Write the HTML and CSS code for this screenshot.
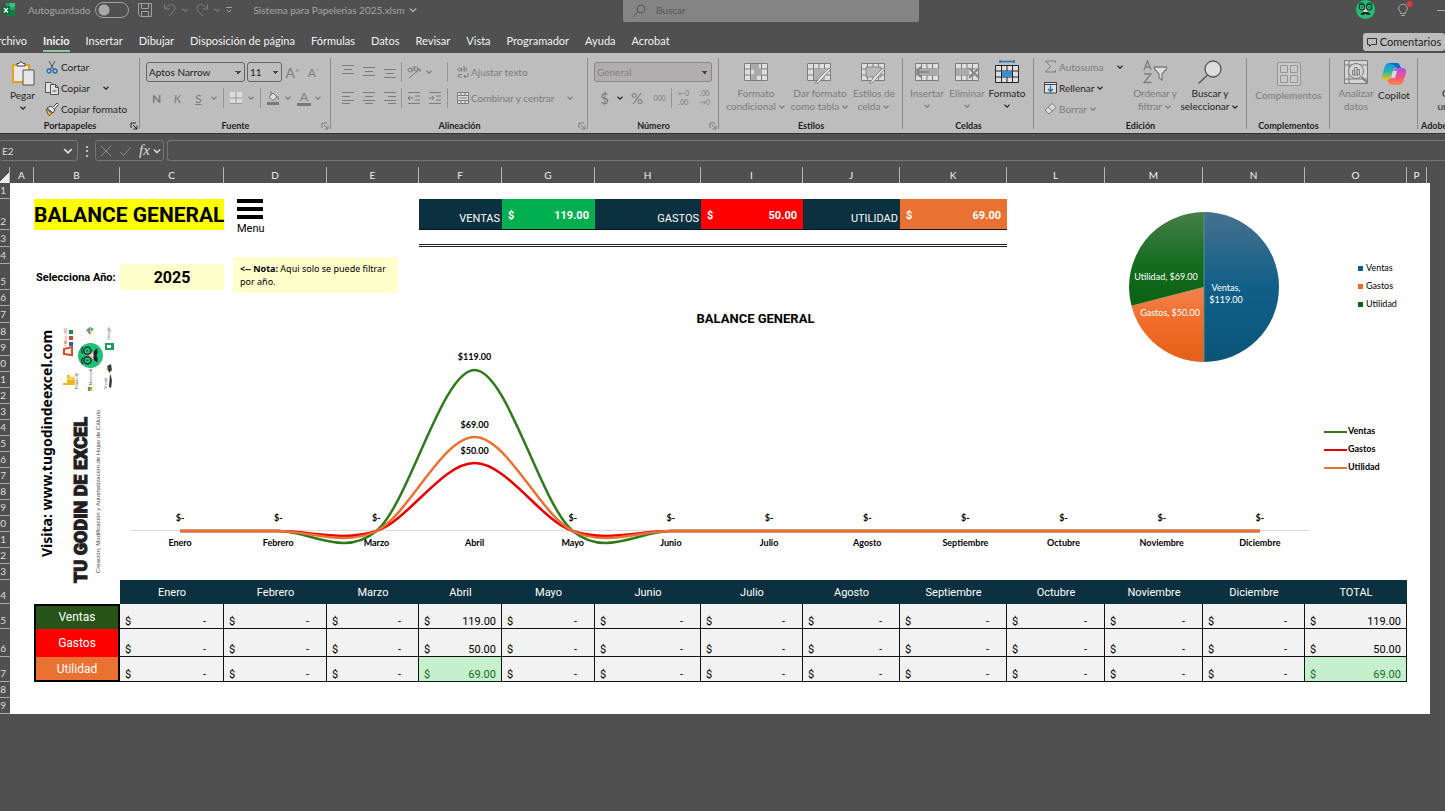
FILE: index.html
```html
<!DOCTYPE html>
<html lang="es">
<head>
  <meta charset="UTF-8">
  <title>Sistema para Papelerias 2025.xlsm</title>
  <link rel="stylesheet" href="styles.css">
</head>
<body>
  <!-- iconos compartidos -->
  <svg class="defs" width="0" height="0" aria-hidden="true">
    <symbol id="chev" viewBox="0 0 8 8"><path d="M1.500 2.800L4 5.200L6.500 2.800" fill="none" stroke="currentColor" stroke-width="1.200"/></symbol>
    <symbol id="launch" viewBox="0 0 8 8"><path d="M1 6V1H6M3 3L7 7M7 3.500V7H3.500" fill="none" stroke="currentColor"/></symbol>
    <symbol id="al-top" viewBox="0 0 12 12"><path d="M0 1.500H12M2 5.500H10M0 9.500H12" stroke="currentColor"/></symbol>
    <symbol id="al-left" viewBox="0 0 12 12"><path d="M0 .5H12M0 4.500H8M0 8.500H12M0 11.500H8" stroke="currentColor"/></symbol>
    <symbol id="al-center" viewBox="0 0 12 12"><path d="M0 .5H12M2 4.500H10M0 8.500H12M2 11.500H10" stroke="currentColor"/></symbol>
    <symbol id="al-right" viewBox="0 0 12 12"><path d="M0 .5H12M4 4.500H12M0 8.500H12M4 11.500H12" stroke="currentColor"/></symbol>
    <symbol id="tabla" viewBox="0 0 24 20"><path d="M.5 1.500H23.500V18.500H.5Z" fill="#dedede" stroke="currentColor"/><path d="M.5 7H23.500M.5 13H23.500M6.500 1.500V18.500M12 1.500V18.500M17.500 1.500V18.500" stroke="currentColor" fill="none"/></symbol>
    <symbol id="cara" viewBox="0 0 24 24"><circle cx="12" cy="12" r="12" fill="#1fc071"/><path d="M12 7L15.500 15H8.500Z" fill="#f3c9a5"/><circle cx="7.500" cy="9" r="3.500" fill="none" stroke="#123" stroke-width="1.300"/><circle cx="16.500" cy="9" r="3.500" fill="none" stroke="#123" stroke-width="1.300"/><path d="M3.500 4.500Q7 2.500 10 4.500M14 4.500Q17 2.500 20.500 4.500" fill="none" stroke="#123"/><path d="M6 18Q9 14 12 16Q15 14 18 18Q14 19 12 17Q10 19 6 18" fill="#123" stroke="#123"/><path d="M7 9H8M16 9H17" stroke="#123" stroke-width="2"/></symbol>
  </svg>

  <header class="titlebar">
    <div class="quick">
      <svg class="xl" width="14" height="14" viewBox="0 0 14 14"><path d="M4 0H13V13H4Z" fill="#21a366"/><path d="M8 0H13V4H8Z" fill="#33c481"/><path d="M4 7H13V13H4Z" fill="#107c41"/><path d="M0 3H8V11H0Z" fill="#0b6b38"/><path d="M2 5L6 9.500M6 5L2 9.500" stroke="#fff" stroke-width="1.300"/></svg>
      <label for="auto">Autoguardado</label>
      <input type="checkbox" id="auto" class="toggle">
      <button class="plain" aria-label="Guardar"><svg width="14" height="14" viewBox="0 0 14 14" fill="none" stroke="#a0a0a0"><path d="M.5.5H13.500V13.500H2.500L.5 11.500ZM3.500.5V5.500H10.500V.5M3.500 13.500V8.500H10.500V13.500"/></svg></button>
      <button class="plain off undo" aria-label="Deshacer"><svg width="14" height="14" viewBox="0 0 14 14" fill="none" stroke="currentColor"><path d="M1.500 1V6H6.500M1.500 6L5 2.500Q9 0 11.500 3Q13 6 10.500 8.500L6 13"/></svg><svg width="8" height="8"><use href="#chev"/></svg></button>
      <button class="plain off undo" aria-label="Rehacer"><svg width="14" height="14" viewBox="0 0 14 14" fill="none" stroke="currentColor"><path d="M12.500 1V6H7.500M12.500 6L9 2.500Q5 0 2.500 3Q1 6 3.500 8.500L8 13"/></svg><svg width="8" height="8"><use href="#chev"/></svg></button>
      <button class="plain" aria-label="Personalizar"><svg width="8" height="8" viewBox="0 0 8 8" fill="none" stroke="#a0a0a0"><path d="M1 1.500H7M2 4L4 6L6 4"/></svg></button>
      <span class="file">Sistema para Papelerias 2025.xlsm <svg width="10" height="10"><use href="#chev"/></svg></span>
    </div>
    <div class="search">
      <svg width="13" height="13" viewBox="0 0 13 13" fill="none" stroke="#555"><circle cx="8" cy="5" r="4"/><path d="M5 8L.5 12.500"/></svg>
      <input type="text" placeholder="Buscar" aria-label="Buscar">
    </div>
    <div class="account">
      <svg width="19" height="19"><use href="#cara"/></svg>
      <svg width="18" height="18" viewBox="0 0 18 18" fill="none" stroke="#a8a8a8"><path d="M5.500 12.500Q5.500 10.500 4 9A4.300 4.300 0 1 1 12 9Q10.500 10.500 10.500 12.500ZM6 14.500H10"/><circle cx="14.500" cy="3" r="3" fill="#d83b3b" stroke="none"/></svg>
      <svg width="10" height="10" viewBox="0 0 10 10"><path d="M0 5.500H10" stroke="#aaa"/></svg>
    </div>
  </header>

  <nav class="tabs">
    <a href="#">Archivo</a>
    <a href="#" class="active">Inicio</a>
    <a href="#">Insertar</a>
    <a href="#">Dibujar</a>
    <a href="#">Disposición de página</a>
    <a href="#">Fórmulas</a>
    <a href="#">Datos</a>
    <a href="#">Revisar</a>
    <a href="#">Vista</a>
    <a href="#">Programador</a>
    <a href="#">Ayuda</a>
    <a href="#">Acrobat</a>
    <button class="comments"><svg width="10" height="10" viewBox="0 0 10 10" fill="none" stroke="#333"><path d="M.5 1.500H9.500V7.500H4.500L2.500 9.500V7.500H.5Z"/></svg>Comentarios</button>
  </nav>

  <section class="ribbon">
    <div class="group clip">
      <div class="tools">
        <button class="big">
          <svg width="24" height="26" viewBox="0 0 24 26"><path d="M2 5H18V22H2Z" fill="#e8e8e8" stroke="#e3a21a" stroke-width="2"/><path d="M6 6V3.500H8Q10 0 12 3.500H14V6Z" fill="#eee" stroke="#444"/><path d="M12 10H23V25H12Z" fill="#e6e6e6" stroke="#555"/></svg>
          Pegar<svg width="8" height="8"><use href="#chev"/></svg>
        </button>
        <div class="stack">
          <button><svg width="14" height="14" viewBox="0 0 14 14" fill="none"><path d="M4 1L9 10M10 1L5 10" stroke="#555"/><circle cx="4" cy="11" r="2" stroke="#1f6fb5" stroke-width="1.300"/><circle cx="10" cy="11" r="2" stroke="#1f6fb5" stroke-width="1.300"/></svg>Cortar</button>
          <button><svg width="14" height="14" viewBox="0 0 14 14" fill="#e2e2e2" stroke="#555"><path d="M.5 1.500H6L7.500 3V11.500H.5Z"/><path d="M5.500 3.500H10.500L13.500 6.500V13.500H5.500ZM10.500 3.500V6.500H13.500M7.500 10H11.500"/></svg>Copiar <svg class="far" width="8" height="8"><use href="#chev"/></svg></button>
          <button><svg width="14" height="14" viewBox="0 0 14 14"><path d="M1 7L7 11L5 13.500L3 12.500Z" fill="#e8b54a" stroke="#7a5a1a"/><path d="M2 6L6 4L10 8L8 11Z" fill="#e6e6e6" stroke="#444"/><path d="M7.500 5.500L12 1L13.500 2.500L9.500 7" fill="#e6e6e6" stroke="#444"/></svg>Copiar formato</button>
        </div>
      </div>
      <div class="caption">Portapapeles<svg width="8" height="8"><use href="#launch"/></svg></div>
    </div>

    <div class="group font">
      <div class="tools rows">
        <div class="row">
          <select class="face" aria-label="Fuente"><option>Aptos Narrow</option></select>
          <select class="size" aria-label="Tamaño"><option>11</option></select>
          <button class="ico off grow">A<sup>^</sup></button>
          <button class="ico off shrink">A<sup>ˇ</sup></button>
        </div>
        <div class="row off">
          <button class="ico"><b>N</b></button>
          <button class="ico"><i>K</i></button>
          <button class="ico"><u>S</u></button>
          <svg class="chev" width="8" height="8"><use href="#chev"/></svg>
          <span class="sep"></span>
          <button class="ico" aria-label="Bordes"><svg width="12" height="12" viewBox="0 0 12 12"><path d="M0 0H12V12H0Z" fill="#dcdcdc"/><path d="M6 0V12M0 6H12M0 11.500H12" stroke="#999"/></svg></button>
          <svg class="chev" width="8" height="8"><use href="#chev"/></svg>
          <span class="sep"></span>
          <button class="ico" aria-label="Relleno"><svg width="14" height="14" viewBox="0 0 14 14"><path d="M3 6L7 2L11 6L7 9.500ZM5 0V4M11 5Q13 7 12 9" fill="#ddd" stroke="#777"/><path d="M1 11H13V14H1Z" fill="#777"/></svg></button>
          <svg class="chev" width="8" height="8"><use href="#chev"/></svg>
          <button class="ico color">A</button>
          <svg class="chev" width="8" height="8"><use href="#chev"/></svg>
        </div>
      </div>
      <div class="caption">Fuente<svg class="off" width="8" height="8"><use href="#launch"/></svg></div>
    </div>

    <div class="group align">
      <div class="tools rows off">
        <div class="row">
          <button class="ico" aria-label="Arriba"><svg class="up" width="12" height="12"><use href="#al-top"/></svg></button>
          <button class="ico" aria-label="Medio"><svg width="12" height="12"><use href="#al-top"/></svg></button>
          <button class="ico" aria-label="Abajo"><svg class="down" width="12" height="12"><use href="#al-top"/></svg></button>
          <span class="sep tight"></span>
          <button class="ico" aria-label="Orientación"><svg width="14" height="14" viewBox="0 0 14 14" fill="none" stroke="currentColor"><circle cx="3" cy="5" r="2"/><path d="M5 3V7M7 1V6M2 13L13 4M10 4H13V7"/><circle cx="9" cy="4" r="2"/></svg></button>
          <svg class="chev" width="8" height="8"><use href="#chev"/></svg>
          <span class="sep push"></span>
          <button class="wide"><svg width="12" height="12" viewBox="0 0 12 12" fill="none" stroke="currentColor"><circle cx="2.500" cy="3.500" r="1.500"/><path d="M4.500 2V5.500M7 0V5.500M5 8.500H2Q.5 9 1 10.500L4.500 11.500M11 7V10.500H7M8.500 9L7 10.500L8.500 12"/><circle cx="8.500" cy="3.500" r="1.500"/></svg>Ajustar texto</button>
        </div>
        <div class="row">
          <button class="ico" aria-label="Izquierda"><svg width="12" height="12"><use href="#al-left"/></svg></button>
          <button class="ico" aria-label="Centrar"><svg width="12" height="12"><use href="#al-center"/></svg></button>
          <button class="ico" aria-label="Derecha"><svg width="12" height="12"><use href="#al-right"/></svg></button>
          <span class="sep tight"></span>
          <button class="ico" aria-label="Reducir sangría"><svg width="12" height="12" viewBox="0 0 12 12" stroke="currentColor" fill="none"><path d="M0 .5H12M7 4H12M7 8H12M0 11.500H12M5 6H0M2 4L0 6L2 8"/></svg></button>
          <button class="ico" aria-label="Aumentar sangría"><svg width="12" height="12" viewBox="0 0 12 12" stroke="currentColor" fill="none"><path d="M0 .5H12M7 4H12M7 8H12M0 11.500H12M5 6H0M3 4L5 6L3 8"/></svg></button>
          <span class="sep mid"></span>
          <button class="wide"><svg width="12" height="12" viewBox="0 0 12 12" stroke="currentColor" fill="#dcdcdc"><path d="M.5.5H11.500V11.500H.5ZM.5 3.500H11.500M.5 8.500H11.500M4 .5V3.500M8 .5V3.500M4 8.500V11.500M8 8.500V11.500M2 6H10"/></svg>Combinar y centrar <svg class="far" width="8" height="8"><use href="#chev"/></svg></button>
        </div>
      </div>
      <div class="caption">Alineación<svg class="off" width="8" height="8"><use href="#launch"/></svg></div>
    </div>

    <div class="group number">
      <div class="tools rows off">
        <div class="row"><select class="format" aria-label="Formato de número" disabled><option>General</option></select></div>
        <div class="row">
          <button class="ico sign">$</button>
          <svg class="chev dark" width="8" height="8"><use href="#chev"/></svg>
          <button class="ico sign percent">%</button>
          <button class="ico tiny">000</button>
          <span class="sep tight"></span>
          <button class="ico tiny"><span>←0</span><span>.00</span></button>
          <button class="ico tiny"><span>.00</span><span>→0</span></button>
        </div>
      </div>
      <div class="caption">Número<svg class="off" width="8" height="8"><use href="#launch"/></svg></div>
    </div>

    <div class="group styles">
      <div class="tools off">
        <button class="big w64"><svg width="24" height="24" viewBox="0 -2 24 24"><use href="#tabla" width="24" height="20"/><path d="M7 2H15V7H7ZM10 7H18V13H10ZM7 13H13V18H7Z" fill="#aaa"/></svg>Formato<span>condicional <svg width="8" height="8"><use href="#chev"/></svg></span></button>
        <button class="big w64"><svg width="26" height="24" viewBox="0 -2 26 24"><use href="#tabla" width="24" height="20"/><path d="M7 7H18V18H7Z" fill="#b0b0b0"/><path d="M24 7L15 17L11 21H8Q11 19 12 16L22 6Z" fill="#e4e4e4" stroke="#888"/></svg>Dar formato<span>como tabla <svg width="8" height="8"><use href="#chev"/></svg></span></button>
        <button class="big w44"><svg width="26" height="24" viewBox="0 -2 26 24"><use href="#tabla" width="24" height="20"/><path d="M5 5H20V15H5Z" fill="#b8b8b8" stroke="#888"/><path d="M24 7L15 17L11 21H8Q11 19 12 16L22 6Z" fill="#e4e4e4" stroke="#888"/></svg>Estilos de<span>celda <svg width="8" height="8"><use href="#chev"/></svg></span></button>
      </div>
      <div class="caption">Estilos</div>
    </div>

    <div class="group cells">
      <div class="tools">
        <button class="big off w40"><svg width="25" height="24" viewBox="0 -2 25 24"><use href="#tabla" width="24" height="20"/><path d="M2 7H24V13H2Z" fill="#aaa"/><path d="M14 10H1M6 5L1 10L6 15" stroke="#888" stroke-width="2" fill="none"/></svg>Insertar<svg width="8" height="8"><use href="#chev"/></svg></button>
        <button class="big off w40"><svg width="25" height="24" viewBox="0 -2 25 24"><use href="#tabla" width="24" height="20"/><path d="M1 7H14V13H1Z" fill="#aaa"/><path d="M14 6L24 16M24 6L14 16" stroke="#888" stroke-width="2"/></svg>Eliminar<svg width="8" height="8"><use href="#chev"/></svg></button>
        <button class="big w40"><svg width="24" height="24" viewBox="0 -4 24 24"><path d="M5 -2.500H19M5 -4V-1M19 -4V-1" stroke="#2a70ab" stroke-width="1.500"/><use href="#tabla" width="24" height="20"/><path d="M7 7H17V13H7Z" fill="#3a8cd0"/></svg>Formato<svg width="8" height="8"><use href="#chev"/></svg></button>
      </div>
      <div class="caption">Celdas</div>
    </div>

    <div class="group edit">
      <div class="tools">
        <div class="stack">
          <button class="off"><svg width="13" height="13" viewBox="0 0 13 13" fill="none" stroke="currentColor"><path d="M11.500 3V1H1.500L6.500 6.500L1.500 12H11.500V10"/></svg>Autosuma <svg class="far dark" width="8" height="8"><use href="#chev"/></svg></button>
          <button><svg width="13" height="13" viewBox="0 0 13 13" fill="#e0e0e0" stroke="#444"><path d="M.5 1.500H12.500V12H.5ZM.5 3.500H12.500"/><path d="M6.500 4.500V10M4 8L6.500 10.500L9 8" stroke="#1f6fb5" fill="none" stroke-width="1.300"/></svg>Rellenar<svg width="8" height="8"><use href="#chev"/></svg></button>
          <button class="off"><svg width="13" height="13" viewBox="0 0 13 13" fill="#ddd" stroke="currentColor"><path d="M1 8L8 1.500L12 5.500L5 12ZM4 5L8.500 9"/></svg>Borrar<svg width="8" height="8"><use href="#chev"/></svg></button>
        </div>
        <button class="big off sort"><svg width="26" height="24" viewBox="0 0 26 24" fill="none" stroke="currentColor" stroke-width="1.300"><path d="M2 10L5.500 1L9 10M3 7H8M2 14H9L2 22.500H9.500"/><path d="M12.500 7H24.500V9L20 14V20L17 18V14L12.500 9Z" fill="#ddd"/></svg>Ordenar y<span>filtrar <svg width="8" height="8"><use href="#chev"/></svg></span></button>
        <button class="big find"><svg width="26" height="24" viewBox="0 0 26 24" fill="#dcdcdc" stroke="#555" stroke-width="1.300"><circle cx="16" cy="9" r="8"/><path d="M10.500 15L1.500 23.500"/></svg>Buscar y<span>seleccionar <svg width="8" height="8"><use href="#chev"/></svg></span></button>
      </div>
      <div class="caption">Edición</div>
    </div>

    <div class="group addins">
      <div class="tools off">
        <button class="big"><svg width="24" height="24" viewBox="0 0 24 24" fill="#c8c8c8" stroke="#969696"><path d="M.5.5H23.500V23.500H.5Z"/><path d="M3.500 3.500H10.500V10.500H3.500ZM13.500 3.500H20.500V10.500H13.500ZM3.500 13.500H10.500V20.500H3.500ZM13.500 13.500H20.500V20.500H13.500Z"/></svg>Complementos</button>
      </div>
      <div class="caption">Complementos</div>
    </div>

    <div class="group copilot">
      <div class="tools">
        <button class="big off w38"><svg width="24" height="24" viewBox="0 0 24 24" fill="#d4d4d4" stroke="currentColor"><path d="M.5.5H23.500V23.500H.5ZM.5 5H23.500M.5 19H23.500M5 .5V23.500"/><circle cx="12" cy="11" r="7.500"/><path d="M17.500 17L23 22.500" stroke-width="2"/><path d="M8.500 10.500H10.500V15H8.500ZM10.500 7.500H13V15H10.500ZM13 9.500H15.500V15H13Z" fill="none"/></svg>Analizar<span>datos</span></button>
        <button class="big w38"><svg width="26" height="24" viewBox="0 0 26 24"><defs><linearGradient id="c1" x2="0" y2="1"><stop offset="0" stop-color="#1a8fe8"/><stop offset=".5" stop-color="#29b6a8"/><stop offset="1" stop-color="#f2c31b"/></linearGradient><linearGradient id="c2" x2="0" y2="1"><stop offset="0" stop-color="#a855e8"/><stop offset=".5" stop-color="#f0508c"/><stop offset="1" stop-color="#ff8a3c"/></linearGradient></defs><path d="M8 1H16Q18 1 19 4L20 6H16Q13 6 12 9L10 16Q9 18 6 18H4Q0 18 1 13L4 4Q5 1 8 1Z" fill="url(#c1)"/><path d="M18 23H10Q8 23 7 20L6 18Q9 18 10 16L13 9Q14 6 17 6H21Q26 6 25 11L22 20Q21 23 18 23Z" fill="url(#c2)"/><path d="M8 1H16Q18 1 19 4L20 6H16L13 3Z" fill="#1c5fd0"/><path d="M12 9L10 16H14L16 9Z" fill="#d8d8e8"/></svg>Copilot</button>
      </div>
      <div class="caption"></div>
    </div>

    <div class="group adobe">
      <div class="tools">
        <button class="big"><svg width="22" height="24" viewBox="0 0 22 24"><path d="M3 3.500H20V21H3Z" fill="#d9e2f5" stroke="#3467c9" stroke-width="1.500"/></svg>Crear<span>un PDF</span></button>
      </div>
      <div class="caption">Adobe Acrobat</div>
    </div>
  </section>

  <div class="formula">
    <div class="namebox"><input type="text" value="E2" aria-label="Cuadro de nombres"><svg width="12" height="12"><use href="#chev"/></svg></div>
    <span class="dots">⋮</span>
    <div class="fx">
      <svg width="12" height="12" viewBox="0 0 12 12"><path d="M1 1L11 11M11 1L1 11" stroke="#8a8a8a"/></svg>
      <svg width="13" height="12" viewBox="0 0 13 12"><path d="M1 7L4.500 10.500L12 2" stroke="#8a8a8a" fill="none"/></svg>
      <i>fx</i><svg width="10" height="10"><use href="#chev"/></svg>
    </div>
    <input type="text" class="entry" aria-label="Barra de fórmulas">
  </div>

  <div class="colhead">
    <span class="corner"></span>
    <span>A</span><span>B</span><span>C</span><span>D</span><span>E</span><span>F</span><span>G</span><span>H</span><span>I</span><span>J</span><span>K</span><span>L</span><span>M</span><span>N</span><span>O</span><span>P</span>
  </div>

  <main class="grid">
    <div class="rowhead">
      <span>1</span><span>2</span><span>3</span><span>4</span><span>5</span><span>6</span><span>7</span><span>8</span><span>9</span><span>10</span><span>11</span><span>12</span><span>13</span><span>14</span><span>15</span><span>16</span><span>17</span><span>18</span><span>19</span><span>20</span><span>21</span><span>22</span><span>23</span><span>24</span><span>25</span><span>26</span><span>27</span><span>28</span><span>29</span>
    </div>

    <div class="sheet">
      <h1 class="title">BALANCE GENERAL</h1>
      <button class="menu"><svg width="26" height="20" viewBox="0 0 26 20"><path d="M0 2H26M0 10H26M0 18H26" stroke="#000" stroke-width="4"/></svg>Menu</button>

      <div class="kpis">
        <span class="kpi-name">VENTAS</span><b class="kpi ventas"><span>$</span><span>119.00</span></b>
        <span class="kpi-name">GASTOS</span><b class="kpi gastos"><span>$</span><span>50.00</span></b>
        <span class="kpi-name">UTILIDAD</span><b class="kpi utilidad"><span>$</span><span>69.00</span></b>
      </div>
      <div class="double"></div>

      <div class="year-label">Selecciona Año:</div>
      <div class="year">2025</div>
      <p class="note"><b>&lt;-- Nota:</b> Aqui solo se puede filtrar por año.</p>

      <svg class="brand" width="86" height="264" viewBox="0 0 86 264">
        <text class="visit" transform="translate(18 234) rotate(-90)">Visita: www.tugodindeexcel.com</text>
        <text class="name" transform="translate(53 260) rotate(-90)">TU GODIN DE EXCEL</text>
        <text class="slogan" transform="translate(66 250) rotate(-90)">Creación, Modificación y Automatización de Hojas de Cálculo</text>
        <g transform="translate(0 -3)">
          <use href="#cara" x="-12" y="-12" width="25" height="25" transform="translate(56 36) rotate(-90)"/>
          <path d="M30 29L38 27V35L30 34Z" fill="none" stroke="#dd4b25" stroke-width="2"/>
          <path d="M35 10H39V14H35Z" fill="#1f8a50"/><path d="M35 16H39V20H35Z" fill="#c4443a"/><path d="M35 22H39V26H35Z" fill="#2b5fb0"/>
          <text class="mini red" transform="translate(33 26) rotate(-90)">Office 365</text>
          <path d="M52 10L56 7V12Z" fill="#2c9be0"/><path d="M52 10L57 12L56 15Z" fill="#e46a2e"/><path d="M56 7L60 9L57 12Z" fill="#4caf50"/>
          <path d="M71 23H80V30H71Z" fill="#1f9e5b"/><path d="M73 25H77V28H73Z" fill="#fff"/>
          <text class="mini" transform="translate(76 20) rotate(-90)">Google</text>
          <path d="M29 63H33V55H36V59H41V65H29Z" fill="#f0b41e"/><path d="M33 57H41V60H33Z" fill="#f7cf4e"/>
          <text class="mini" transform="translate(44 69) rotate(-90)">Power BI</text>
          <path d="M54 67H56V69H54Z" fill="#f25022"/><path d="M56 67H58V69H56Z" fill="#7fba00"/><path d="M54 69H56V71H54Z" fill="#00a4ef"/><path d="M56 69H58V71H56Z" fill="#ffb900"/>
          <text class="mini" transform="translate(58 65) rotate(-90)">Microsoft</text>
          <path d="M73 46L77 44L78 50L75 53Z" fill="#443a4a"/><path d="M72 49L74 47V51Z" fill="#d7a928"/><path d="M76 54Q79 58 77 68L75 67Z" fill="#333"/>
          <text class="mini" transform="translate(73 69) rotate(-90)">Visual</text>
        </g>
      </svg>

      <svg class="pie" width="152" height="152" viewBox="-76 -76 152 152">
        <defs>
          <linearGradient id="pv" gradientUnits="userSpaceOnUse" x1="0" y1="-75" x2="0" y2="75"><stop offset="0" stop-color="#46708f"/><stop offset=".5" stop-color="#115f87"/><stop offset="1" stop-color="#0a5679"/></linearGradient>
          <linearGradient id="pg" gradientUnits="userSpaceOnUse" x1="0" y1="0" x2="0" y2="75"><stop offset="0" stop-color="#f0834f"/><stop offset=".5" stop-color="#f26b26"/><stop offset="1" stop-color="#e2601a"/></linearGradient>
          <linearGradient id="pu" gradientUnits="userSpaceOnUse" x1="0" y1="-75" x2="0" y2="18"><stop offset="0" stop-color="#467f49"/><stop offset=".6" stop-color="#136b1c"/><stop offset="1" stop-color="#0b6114"/></linearGradient>
        </defs>
        <path d="M0 0V-75A75 75 0 0 1 0 75Z" fill="url(#pv)"/>
        <path d="M0 0V75A75 75 0 0 1 -72.600 18.700Z" fill="url(#pg)"/>
        <path d="M0 0L-72.600 18.700A75 75 0 0 1 0 -75Z" fill="url(#pu)"/>
        <path d="M0 -75V75" stroke="#5d8f8f"/>
        <text x="22" y="4">Ventas,</text>
        <text x="22" y="16">$119.00</text>
        <text x="-38" y="-7">Utilidad, $69.00</text>
        <text x="-34" y="29">Gastos, $50.00</text>
      </svg>
      <ul class="pie-legend">
        <li class="l-azul">Ventas</li>
        <li class="l-naranja">Gastos</li>
        <li class="l-verde">Utilidad</li>
      </ul>

      <h2 class="chart-title">BALANCE GENERAL</h2>
      <div class="chart">
        <svg width="100%" height="200" viewBox="0 0 1200 200" preserveAspectRatio="none">
          <path class="axis" d="M0 170.500H1200"/>
          <g stroke-width="2.500">
            <path class="s-ventas" d="M50 171H150C183 171 217 198 250 171C283 144 317 10 350 10C383 10 417 144 450 171C483 198 517 171 550 171H1150"/>
            <path class="s-gastos" d="M50 171H150C183 171 217 182 250 171C283 160 317 103 350 103C383 103 417 160 450 171C483 182 517 171 550 171H1150"/>
            <path class="s-utilidad" d="M50 171H150C183 171 217 187 250 171C283 155 317 77 350 77C383 77 417 155 450 171C483 187 517 171 550 171H1150"/>
          </g>
        </svg>
        <div class="values">
          <span>$-</span><span>$-</span><span>$-</span>
          <div class="peak"><span class="v119">$119.00</span><span class="v69">$69.00</span><span class="v50">$50.00</span></div>
          <span>$-</span><span>$-</span><span>$-</span><span>$-</span><span>$-</span><span>$-</span><span>$-</span><span>$-</span>
        </div>
        <div class="months">
          <span>Enero</span><span>Febrero</span><span>Marzo</span><span>Abril</span><span>Mayo</span><span>Junio</span><span>Julio</span><span>Agosto</span><span>Septiembre</span><span>Octubre</span><span>Noviembre</span><span>Diciembre</span>
        </div>
      </div>
      <ul class="line-legend">
        <li class="l-ventas">Ventas</li>
        <li class="l-gastos">Gastos</li>
        <li class="l-utilidad">Utilidad</li>
      </ul>

      <table class="balance">
        <thead>
          <tr><td class="empty"></td><th>Enero</th><th>Febrero</th><th>Marzo</th><th>Abril</th><th>Mayo</th><th>Junio</th><th>Julio</th><th>Agosto</th><th>Septiembre</th><th>Octubre</th><th>Noviembre</th><th>Diciembre</th><th>TOTAL</th></tr>
        </thead>
        <tbody>
          <tr>
            <th class="r-ventas" scope="row">Ventas</th>
            <td>$<span class="nil">-</span></td><td>$<span class="nil">-</span></td><td>$<span class="nil">-</span></td>
            <td>$<span>119.00</span></td>
            <td>$<span class="nil">-</span></td><td>$<span class="nil">-</span></td><td>$<span class="nil">-</span></td><td>$<span class="nil">-</span></td>
            <td>$<span class="nil">-</span></td><td>$<span class="nil">-</span></td><td>$<span class="nil">-</span></td><td>$<span class="nil">-</span></td>
            <td>$<span>119.00</span></td>
          </tr>
          <tr>
            <th class="r-gastos" scope="row">Gastos</th>
            <td>$<span class="nil">-</span></td><td>$<span class="nil">-</span></td><td>$<span class="nil">-</span></td>
            <td>$<span>50.00</span></td>
            <td>$<span class="nil">-</span></td><td>$<span class="nil">-</span></td><td>$<span class="nil">-</span></td><td>$<span class="nil">-</span></td>
            <td>$<span class="nil">-</span></td><td>$<span class="nil">-</span></td><td>$<span class="nil">-</span></td><td>$<span class="nil">-</span></td>
            <td>$<span>50.00</span></td>
          </tr>
          <tr>
            <th class="r-utilidad" scope="row">Utilidad</th>
            <td>$<span class="nil">-</span></td><td>$<span class="nil">-</span></td><td>$<span class="nil">-</span></td>
            <td class="good">$<span>69.00</span></td>
            <td>$<span class="nil">-</span></td><td>$<span class="nil">-</span></td><td>$<span class="nil">-</span></td><td>$<span class="nil">-</span></td>
            <td>$<span class="nil">-</span></td><td>$<span class="nil">-</span></td><td>$<span class="nil">-</span></td><td>$<span class="nil">-</span></td>
            <td class="good">$<span>69.00</span></td>
          </tr>
        </tbody>
      </table>
    </div>
  </main>
</body>
</html>
```

FILE: styles.css
```css
:root{
  --cols: 10px 24fr 86fr 104fr 103fr 92fr 83fr 93fr 106fr 102fr 97fr 107fr 98fr 98fr 102fr 102fr 20fr 3fr 15px;
  --rows: 16px 31px 17px 17px 26px 16px 17px 17px repeat(15, 16px) 24px 25px 28px 25px 16px 16px;
  --ui: Lato, "Open Sans", sans-serif;
}
*{
  box-sizing: border-box;
}
body{
  margin: 0;
  background: #505050;
  color: #000;
  font-family: var(--ui);
  font-size: 11px;
  overflow-x: hidden;
}
button, input, select{
  font: inherit;
  color: inherit;
  margin: 0;
  padding: 0;
  border: none;
  background: none;
}
svg{
  flex: none;
}
.defs{
  position: absolute;
}

/* barra de titulo */
.titlebar{
  display: grid;
  grid-template-columns: 623fr 296fr 526fr;
  height: 28px;
  color: #a6a6a6;
  font-size: 10px;
}
.quick{
  display: flex;
  align-items: center;
  height: 19px;
  padding-left: 2px;
  white-space: nowrap;
}
.quick label{
  margin-left: 12px;
}
.toggle{
  appearance: none;
  width: 34px;
  height: 16px;
  margin: 0 9px 0 5px;
  border: 1px solid #a0a0a0;
  border-radius: 8px;
  background: radial-gradient(circle at 8px 7px, #a8a8a8 5px, transparent 6px);
}
.plain{
  display: flex;
  align-items: center;
  gap: 4px;
  margin-right: 9px;
}
.undo{
  color: #6e6e6e;
  margin: 0 4px 0 2px;
}
.file{
  display: flex;
  align-items: center;
  gap: 3px;
  margin-left: 11px;
}
.search{
  display: flex;
  align-items: center;
  gap: 10px;
  height: 22px;
  padding: 0 10px 2px;
  background: #848484;
  border-radius: 0 0 2px 2px;
}
.search input{
  flex: 1;
}
.search input::placeholder{
  color: #555;
}
.account{
  display: flex;
  align-items: center;
  justify-content: flex-end;
  height: 19px;
  gap: 20px;
}
.account svg:last-child{
  margin: 0 -2px 0 4px;
}

/* pestañas */
.tabs{
  display: flex;
  align-items: center;
  gap: 16px;
  height: 25px;
  padding-top: 2px;
  margin-left: -10px;
  white-space: nowrap;
}
.tabs a{
  color: #f2f2f2;
  text-decoration: none;
  line-height: 18px;
  border-bottom: 2px solid transparent;
}
.tabs .active{
  font-weight: bold;
  border-color: #8fc7a5;
}
.comments{
  display: flex;
  align-items: center;
  justify-content: center;
  gap: 3px;
  width: 82px;
  height: 18px;
  margin-left: auto;
  background: #bdbdbd;
  border-radius: 3px;
  color: #222;
}

/* cinta */
.ribbon{
  display: flex;
  height: 81px;
  padding-top: 3px;
  background: #bdbdbd;
  border-bottom: 1px solid #333;
  color: #262626;
  font-size: 10px;
  white-space: nowrap;
  overflow: hidden;
}
.group{
  flex: none;
  display: flex;
  flex-direction: column;
  position: relative;
}
.group::after{
  content: "";
  position: absolute;
  right: 0;
  top: 2px;
  bottom: 4px;
  border-right: 1px solid #8c8c8c;
}
.tools{
  display: flex;
  height: 63px;
}
.caption{
  display: flex;
  align-items: center;
  justify-content: center;
  height: 13px;
  font-size: 9px;
  font-weight: bold;
  color: #222;
}
.caption svg{
  position: absolute;
  right: 2px;
  width: 8px;
}
.off{
  color: #7c7c7c;
}
.dark{
  color: #262626;
}
.clip{ width: 140px; }
.font{ width: 191px; }
.align{ width: 257px; }
.number{ width: 131px; }
.styles{ width: 184px; }
.cells{ width: 131px; }
.edit{ width: 213px; }
.addins{ width: 83px; }
.copilot{ width: 88px; }
.adobe{ width: 72px; }

.big{
  display: flex;
  flex-direction: column;
  align-items: center;
  padding-top: 4px;
  line-height: 13px;
}
.big > svg:first-child{
  margin-bottom: 3px;
}
.big > svg:last-child{
  margin-top: 2px;
}
.big span{
  display: flex;
  align-items: center;
  gap: 2px;
}
.w64{ width: 64px; }
.w44{ width: 44px; }
.w40{ width: 40px; }
.w38{ width: 38px; }
.clip .big{ width: 45px; }
.styles .tools{ padding-left: 5px; }
.cells .tools{ padding-left: 4px; }
.addins .big, .adobe .big{ width: 100%; }
.adobe .caption{ justify-content: flex-start; padding-left: 3px; }
.copilot .tools{ padding-left: 7px; }
.sort{ width: 50px; }
.find{ width: 60px; }

.stack{
  display: flex;
  flex-direction: column;
}
.stack button{
  display: flex;
  align-items: center;
  gap: 2px;
  height: 21px;
}
.clip .stack .far{ margin-left: 10px; }
.edit .stack{
  width: 86px;
  margin: 0 10px 0 0;
  padding-left: 10px;
}
.edit .stack .far{ margin-left: 10px; }

.rows{
  flex-direction: column;
  padding: 3px 0 0 6px;
}
.row{
  display: flex;
  align-items: center;
  height: 26px;
}
.ico{
  display: flex;
  align-items: center;
  justify-content: center;
  width: 21px;
  height: 20px;
  font-size: 12px;
}
.grow, .shrink{ font-size: 14px; }
.shrink{ font-size: 12px; }
.ico sup{ font-size: 8px; }
.color{
  width: 14px;
  height: 16px;
  margin: 0 2px 0 4px;
  border-bottom: 3px solid #777;
}
.chev{ margin: 0 1px; }
.sep{
  height: 20px;
  margin: 0 1px 0 4px;
  border-left: 1px solid #949494;
}
.tight{ margin: 0 1px; }
.push{ margin: 0 9px 0 13px; }
.mid{ margin: 0 9px 0 2px; }
.wide{
  display: flex;
  align-items: center;
  gap: 2px;
}
.wide .far{ margin-left: 10px; }
.up{ margin-bottom: 4px; }
.down{ margin-top: 4px; }
.sign{ font-size: 15px; }
.percent{ width: 24px; }
.tiny{
  flex-direction: column;
  font-size: 7px;
  line-height: 9px;
}
.row select{
  appearance: none;
  height: 20px;
  padding-left: 2px;
  border: 1px solid #666;
  border-radius: 3px;
  color: #222;
  background: linear-gradient(45deg, transparent 50%, #444 50%) right 6px center / 3px 3px no-repeat, linear-gradient(-45deg, transparent 50%, #444 50%) right 3px center / 3px 3px no-repeat;
}
.row .face{
  width: 99px;
  margin-right: 2px;
}
.row .size{ width: 35px; }
.row .format{
  width: 118px;
  color: #808080;
  border-color: #888;
  opacity: 1;
  background-color: #b0aeae;
}

/* barra de formulas */
.formula{
  display: flex;
  align-items: center;
  height: 33px;
  color: #ddd;
}
.namebox, .fx, .entry{
  height: 21px;
  border: 1px solid #757575;
  border-radius: 3px;
}
.namebox{
  display: flex;
  align-items: center;
  width: 78px;
  padding-right: 3px;
  border-left: none;
  font-size: 10px;
}
.namebox input{
  flex: 1;
  min-width: 0;
  padding-left: 2px;
}
.dots{
  width: 17px;
  text-align: center;
  font-size: 14px;
}
.fx{
  display: flex;
  align-items: center;
  gap: 7px;
  width: 69px;
  padding-left: 4px;
}
.fx i{
  font-family: "Liberation Serif", serif;
  font-size: 15px;
}
.fx i + svg{ margin-left: -5px; }
.entry{
  flex: 1;
  margin-left: 3px;
  border-right: none;
  border-radius: 3px 0 0 3px;
}

/* encabezados */
.colhead{
  display: grid;
  grid-template-columns: var(--cols);
  height: 16px;
  color: #f0f0f0;
  font-size: 10px;
  line-height: 16px;
  text-align: center;
}
.colhead span{
  min-width: 0;
  border-right: 1px solid #b5b5b5;
}
.colhead .corner{
  background: linear-gradient(135deg, transparent 60%, #eee 60%);
}
.grid{
  display: grid;
  grid-template-columns: var(--cols);
  grid-template-rows: var(--rows);
}
.rowhead{
  display: grid;
  grid-row: 1 / -1;
  grid-template-columns: 10px;
  grid-template-rows: subgrid;
  color: #ddd;
  font-size: 10px;
  overflow: hidden;
}
.rowhead span{
  display: flex;
  align-items: flex-end;
  justify-content: flex-end;
  padding-right: 4px;
  border-bottom: 1px solid #aaa;
  line-height: 15px;
}

/* hoja */
.sheet{
  display: grid;
  grid-column: 2 / 19;
  grid-row: 1 / -1;
  grid-template-columns: subgrid;
  grid-template-rows: subgrid;
  background: #fff;
  font-family: Roboto, "Liberation Sans", sans-serif;
  font-size: 11px;
}
.sheet > *{
  min-width: 0;
}
.title{
  grid-column: 2 / 4;
  grid-row: 2;
  margin: 0;
  background: #ff0;
  font-size: 21px;
  line-height: 33px;
  text-align: center;
  white-space: nowrap;
}
.menu{
  grid-column: 4;
  grid-row: 2 / 4;
  justify-self: start;
  display: flex;
  flex-direction: column;
  gap: 3px;
  margin-left: 13px;
}
.kpis{
  display: grid;
  grid-column: 6 / 12;
  grid-row: 2;
  grid-template-columns: subgrid;
  border-bottom: 1px solid #111;
  color: #fff;
}
.kpi-name{
  padding: 9px 2px 0 0;
  background: #0b3040;
  line-height: 21px;
  text-align: right;
}
.kpi{
  display: flex;
  align-items: center;
  justify-content: space-between;
  padding: 2px 6px 0;
}
.kpi.ventas{ background: #00b050; }
.kpi.gastos{ background: #f00; }
.kpi.utilidad{ background: #e97132; }
.double{
  grid-column: 6 / 12;
  grid-row: 3;
  border-bottom: 3px double #222;
}
.year-label{
  grid-column: 2;
  grid-row: 5;
  padding-left: 2px;
  font-weight: bold;
  line-height: 27px;
  white-space: nowrap;
}
.year{
  grid-column: 3;
  grid-row: 5;
  background: #ffffcc;
  font-size: 16px;
  font-weight: bold;
  line-height: 27px;
  text-align: center;
}
.note{
  grid-column: 4 / 6;
  grid-row: 4 / 7;
  align-self: start;
  margin: 10px 21px 0 9px;
  padding: 5px 8px 5px 7px;
  background: #ffffcc;
  font-family: "Noto Sans", sans-serif;
  font-size: 9px;
  line-height: 13px;
}
.brand{
  grid-column: 2;
  grid-row: 8 / 24;
}
.visit{
  font: bold 14px "Noto Sans", sans-serif;
}
.name{
  font: 900 18px Roboto, "Liberation Sans", sans-serif;
  fill: #231f20;
  stroke: #231f20;
}
.slogan{
  font: 6px "Liberation Sans", sans-serif;
  fill: #444;
}
.mini{
  font: 4px "Liberation Sans", sans-serif;
  fill: #555;
}
.red{ fill: #d4431f; }

.pie{
  grid-column: 13 / 15;
  grid-row: 2 / 13;
  justify-self: center;
  margin: 12px 2px 0 0;
}
.pie text{
  fill: #fff;
  font: 9px var(--ui);
  text-anchor: middle;
}
.pie-legend, .line-legend{
  margin: 0;
  padding: 0;
  list-style: none;
  font-family: var(--ui);
  font-size: 9px;
  line-height: 18px;
  white-space: nowrap;
}
.pie-legend{
  grid-column: 15;
  grid-row: 4 / 9;
  margin: 12px 0 0 53px;
}
.pie-legend li::before{
  content: "";
  display: inline-block;
  width: 5px;
  height: 5px;
  margin-right: 3px;
}
.l-azul::before{ background: #115f87; }
.l-naranja::before{ background: #f26b26; }
.l-verde::before{ background: #0b6114; }
.line-legend{
  grid-column: 15;
  grid-row: 14 / 19;
  margin: 2px 0 0 19px;
  font-weight: bold;
}
.line-legend li::before{
  content: "";
  display: inline-block;
  width: 23px;
  margin-right: 1px;
  border-top: 2px solid;
  vertical-align: middle;
}
.l-ventas::before{ color: #2f7a1c; }
.l-gastos::before{ color: #e80000; }
.l-utilidad::before{ color: #e97132; }

.chart-title{
  grid-column: 3 / 16;
  grid-row: 7 / 9;
  margin: 5px 16px 0 0;
  font-size: 13px;
  line-height: 16px;
  text-align: center;
}
.chart{
  grid-column: 3 / 15;
  grid-row: 9 / 24;
  position: relative;
  margin: 20px -4px 0 11px;
  font: bold 9px var(--ui);
}
.chart svg{
  display: block;
}
.chart path{
  fill: none;
  vector-effect: non-scaling-stroke;
}
.chart .axis{
  stroke: #d9d9d9;
}
.s-ventas{ stroke: #2f7a1c; }
.s-gastos{ stroke: #e80000; }
.s-utilidad{ stroke: #e97132; }
.values, .months{
  position: absolute;
  left: 0;
  right: 0;
  display: grid;
  grid-template-columns: repeat(12, 1fr);
  line-height: 12px;
  text-align: center;
}
.values{ top: 152px; }
.months{ top: 177px; }
.peak{ position: relative; }
.peak span{
  position: absolute;
  left: 0;
  right: 0;
}
.v119{ bottom: 161px; }
.v69{ bottom: 93px; }
.v50{ bottom: 67px; }

/* tabla de meses */
.balance{
  display: grid;
  grid-column: 2 / 16;
  grid-row: 24 / 28;
  grid-template-columns: subgrid;
  grid-template-rows: subgrid;
}
.balance thead, .balance tbody, .balance tr{
  display: contents;
}
.balance th{
  padding: 0;
  background: #0b3040;
  color: #fff;
  font-weight: normal;
  line-height: 26px;
}
.balance td{
  display: flex;
  align-items: flex-end;
  justify-content: space-between;
  padding: 0 5px;
  background: #f2f2f2;
  border: solid #111;
  border-width: 0 1px 1px 0;
  line-height: 13px;
}
.balance .empty{
  background: none;
  border: none;
}
.nil{ padding-right: 12px; }
.balance tbody th{
  border: solid #000;
  border-width: 0 2px;
  font-size: 12px;
}
.balance .r-ventas{
  background: #275317;
  border-top-width: 2px;
  line-height: 22px;
}
.balance .r-gastos{
  background: #f00;
  line-height: 28px;
}
.balance .r-utilidad{
  background: #e97132;
  border-bottom-width: 2px;
  line-height: 24px;
}
.balance .good{
  background: #c6efce;
  color: #1c6b1c;
}
```
